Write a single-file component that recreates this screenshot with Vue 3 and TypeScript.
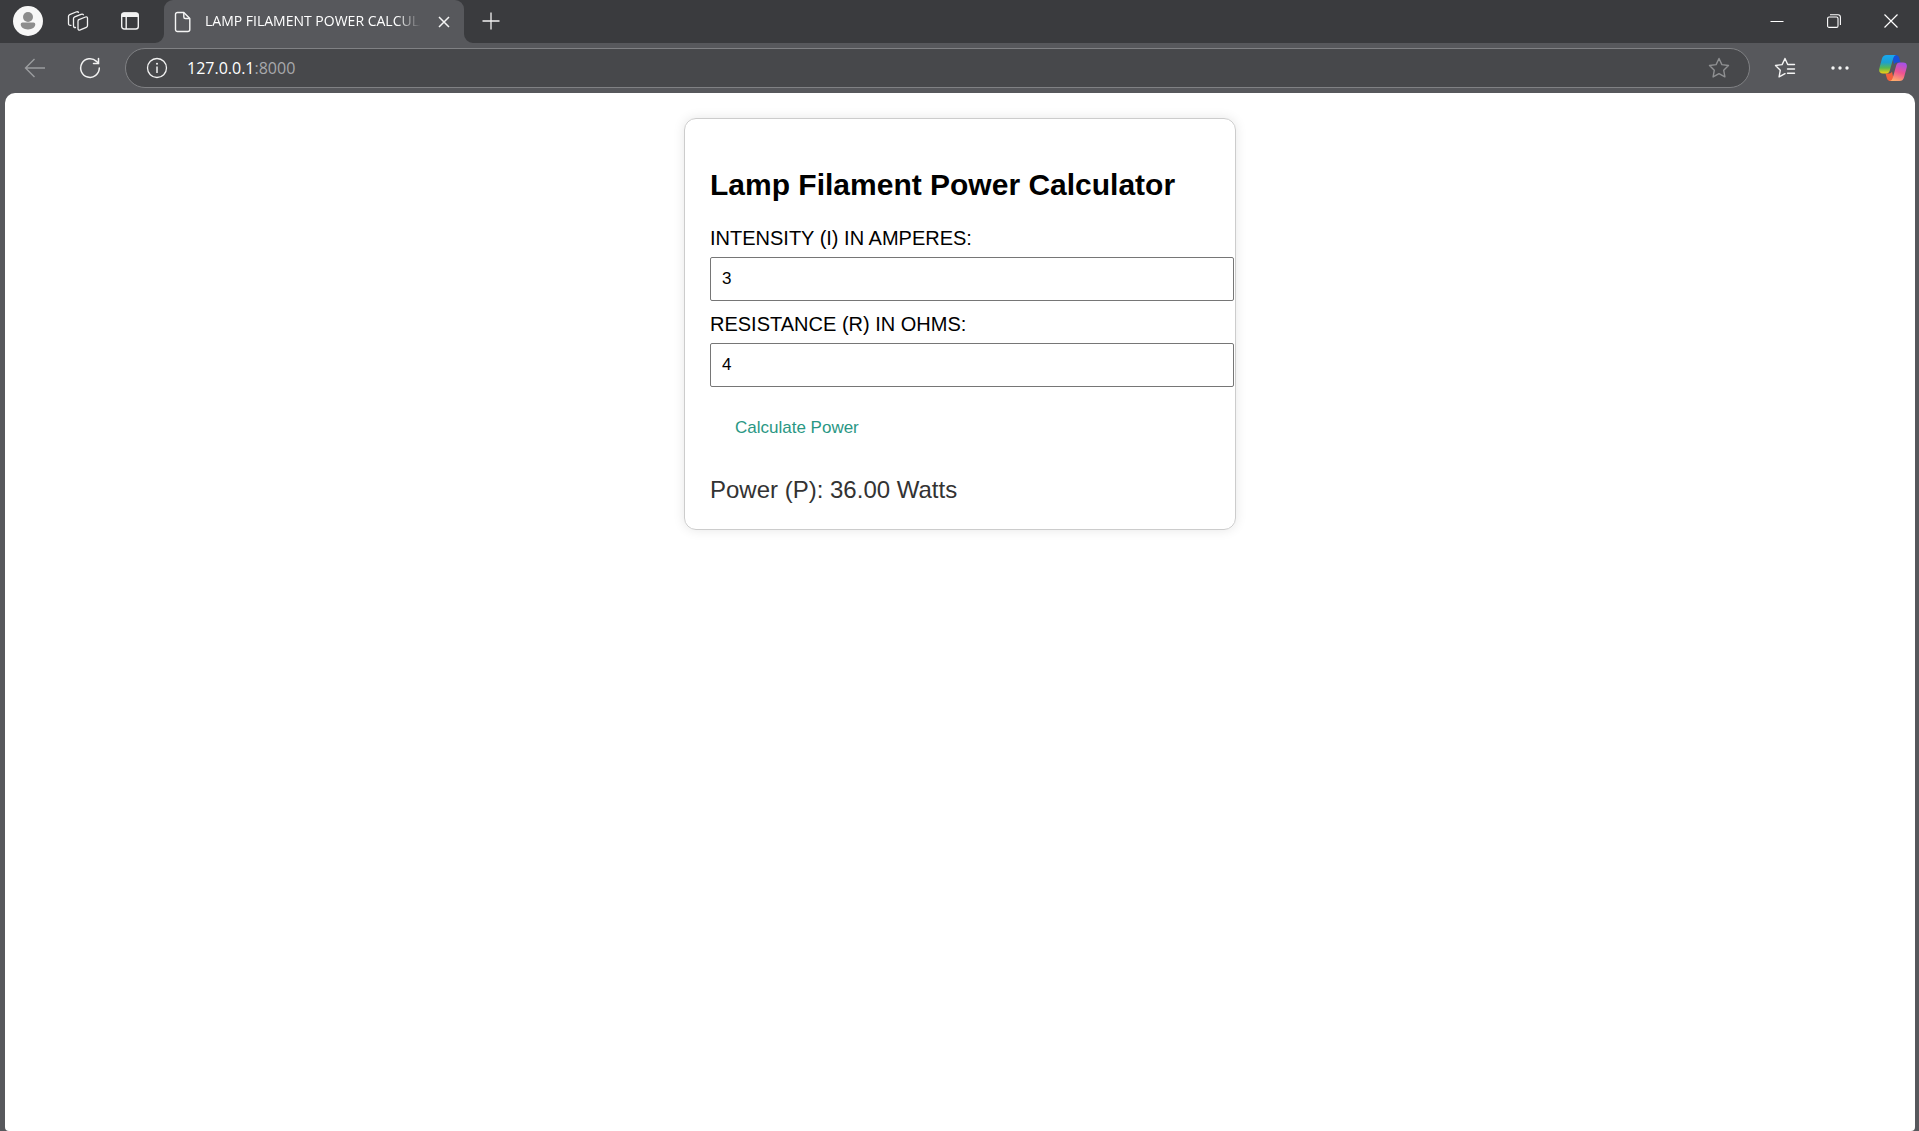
<script setup lang="ts">
import { computed, ref } from 'vue'

const intensity = ref<number>(3)
const resistance = ref<number>(4)
const power = ref<number>(36)

const powerText = computed<string>(() => power.value.toFixed(2))

function calculatePower(): void {
  power.value = intensity.value ** 2 * resistance.value
}
</script>

<template>
  <div class="browser">
    <header class="titlebar">
      <div class="tab-tools">
        <button class="icon-button profile" type="button" aria-label="Profile">
          <svg width="30" height="30" viewBox="0 0 30 30">
            <circle cx="15" cy="15" r="15" fill="#f7f7f7" />
            <circle cx="15" cy="11" r="5" fill="#8c8c8c" />
            <path d="M9.500 16.500h11a1.800 1.800 0 0 1 1.800 1.800c0 3-3 5.200-7.300 5.200s-7.300-2.200-7.300-5.200A1.800 1.800 0 0 1 9.500 16.500z" fill="#8c8c8c" />
          </svg>
        </button>
        <button class="icon-button workspaces" type="button" aria-label="Workspaces">
          <svg width="22" height="22" viewBox="0 0 22 22" fill="none" stroke="#f2f2f2" stroke-width="1.300" stroke-linejoin="round" stroke-linecap="round">
            <path d="M11.300 9.800 18.500 7q2-.6 2 1.200v7.300q0 1.300-1.200 1.800l-6 2.500q-2.300.8-2.300-1.200v-7.500q0-.9.800-1.300z" />
            <path d="M8.500 17.500q-2 .2-2-1.800V8.600q0-1.200 1.200-1.700L14 4.300q1.800-.6 2.400.5" />
            <path d="M4 15.300q-2.500.3-2.500-1.800V6.300q0-1.200 1.200-1.700L9 2q1.700-.6 2.500.3" />
          </svg>
        </button>
        <button class="icon-button" type="button" aria-label="Tab actions">
          <svg width="20" height="20" viewBox="0 0 20 20" fill="none" stroke="#f2f2f2" stroke-width="1.400">
            <rect x="1.700" y="2" width="16.600" height="16" rx="2.500" />
            <path d="M1.500 6V4.500a3 3 0 0 1 3-3h11a3 3 0 0 1 3 3V6z" fill="#f2f2f2" stroke="none" />
            <path d="M6.200 6v12" />
          </svg>
        </button>
      </div>

      <div class="tab">
        <svg class="flare" width="9" height="9" viewBox="0 0 9 9"><path d="M9 0v9H0a9 9 0 0 0 9-9z" fill="#57585c" /></svg>
        <svg class="flare flare-end" width="9" height="9" viewBox="0 0 9 9"><path d="M0 0v9h9a9 9 0 0 1-9-9z" fill="#57585c" /></svg>
        <svg width="18" height="22" viewBox="0 0 18 22" fill="none" stroke="#f5f5f5" stroke-width="1.400" stroke-linejoin="round">
          <path d="M3.500 1.500h6.300l6 6v11a2 2 0 0 1-2 2H3.500a2 2 0 0 1-2-2v-15a2 2 0 0 1 2-2z" />
          <path d="M9.800 1.700v4.300q0 1.500 1.500 1.500h4.500" />
        </svg>
        <span class="tab-title">LAMP FILAMENT POWER CALCULATOR</span>
        <button class="icon-button" type="button" aria-label="Close tab">
          <svg width="12" height="12" viewBox="0 0 12 12" stroke="#f5f5f5" stroke-width="1.500"><path d="M1 1l10 10M11 1 1 11" /></svg>
        </button>
      </div>

      <button class="icon-button new-tab" type="button" aria-label="New tab">
        <svg width="18" height="18" viewBox="0 0 18 18" stroke="#f2f2f2" stroke-width="1.300"><path d="M9 .5v17M.5 9h17" /></svg>
      </button>

      <div class="window-controls">
        <button class="icon-button" type="button" aria-label="Minimize">
          <svg width="14" height="14" viewBox="0 0 14 14" stroke="#fff"><path d="M.5 7.500h13" /></svg>
        </button>
        <button class="icon-button" type="button" aria-label="Restore">
          <svg width="14" height="14" viewBox="0 0 14 14" fill="none" stroke="#fff" stroke-width="1.100">
            <rect x=".6" y="3" width="10.400" height="10.400" rx="1.500" />
            <path d="M3 .8h8q2.400 0 2.400 2.400V11" />
          </svg>
        </button>
        <button class="icon-button" type="button" aria-label="Close">
          <svg width="14" height="14" viewBox="0 0 14 14" stroke="#fff" stroke-width="1.200"><path d="M.5.5l13 13M13.500.5l-13 13" /></svg>
        </button>
      </div>
    </header>

    <nav class="toolbar">
      <button class="icon-button back" type="button" aria-label="Back">
        <svg width="22" height="22" viewBox="0 0 22 22" fill="none" stroke="#9b9c9f" stroke-width="1.400"><path d="M21 11H2M10.500 2 1.500 11l9 9" /></svg>
      </button>
      <button class="icon-button refresh" type="button" aria-label="Refresh">
        <svg width="22" height="22" viewBox="0 0 22 22" fill="none" stroke="#f2f2f2" stroke-width="1.500" stroke-linecap="round">
          <path d="M20.300 11a9.300 9.300 0 1 1-2.800-6.600L19.300 6" />
          <path d="M19.500 1.500v5h-5" />
        </svg>
      </button>

      <div class="address">
        <svg width="22" height="22" viewBox="0 0 22 22" fill="none" stroke="#f2f2f2" stroke-width="1.300">
          <circle cx="11" cy="11" r="9.500" />
          <path d="M11 9.500v6.500" stroke-width="1.500" />
          <circle cx="11" cy="6.700" r="1" fill="#f2f2f2" stroke="none" />
        </svg>
        <span class="url">127.0.0.1<span class="port">:8000</span></span>
        <button class="icon-button" type="button" aria-label="Add to favorites">
          <svg width="22" height="22" viewBox="0 0 22 22" fill="none" stroke="#8f9092" stroke-width="1.400" stroke-linejoin="round">
            <path d="M11 1.500l2.900 6.100 6.600.9-4.800 4.700 1.200 6.700L11 16.700l-5.900 3.200 1.200-6.700L1.500 8.500l6.600-.9z" />
          </svg>
        </button>
      </div>

      <div class="toolbar-end">
        <button class="icon-button" type="button" aria-label="Favorites">
          <svg width="22" height="22" viewBox="0 0 22 22" fill="none" stroke="#f5f5f5" stroke-width="1.400" stroke-linejoin="round" stroke-linecap="round">
            <path d="M20.500 7.500H13.700L11 1.500 8.100 7.600l-6.600.9 4.800 4.700-1.200 6.700 5.900-3.200" />
            <path d="M13.500 12h7M13.500 16.300h7" />
          </svg>
        </button>
        <button class="icon-button more" type="button" aria-label="Settings and more">
          <svg width="18" height="4" viewBox="0 0 18 4" fill="#f5f5f5"><circle cx="2" cy="2" r="1.700" /><circle cx="9" cy="2" r="1.700" /><circle cx="16" cy="2" r="1.700" /></svg>
        </button>
        <button class="icon-button" type="button" aria-label="Copilot">
          <svg width="28" height="26" viewBox="0 0 28 26">
            <defs>
              <linearGradient id="cool" x1="0" y1="0" x2="0" y2="1">
                <stop offset="0" stop-color="#18a8f0" /><stop offset=".4" stop-color="#1c9fd0" /><stop offset=".7" stop-color="#58b850" /><stop offset="1" stop-color="#f5cf12" />
              </linearGradient>
              <linearGradient id="warm" x1=".6" y1="0" x2=".3" y2="1">
                <stop offset="0" stop-color="#a851e6" /><stop offset=".5" stop-color="#ee5490" /><stop offset="1" stop-color="#ffad6b" />
              </linearGradient>
            </defs>
            <path d="M13 0h3.500q2.800 0 3.600 2.800L21.500 7.500h-3.800q-2 0-2.700 2z" fill="#1750d8" />
            <path d="M15 26h-3.500q-2.800 0-3.600-2.800L6.500 18.500h3.800q2 0 2.700-2z" fill="#f2603c" />
            <path d="M7.500 0H17q-2 .4-2.700 3l-3.500 12.500q-.8 3-3.600 3H4q-4.700 0-3.700-5L3 3.500Q4.100 0 7.500 0z" fill="url(#cool)" />
            <path d="M20.500 26H11q2-.4 2.700-3l3.500-12.500q.8-3 3.600-3H24q4.700 0 3.700 5L25 22.500q-1.100 3.500-4.500 3.500z" fill="url(#warm)" />
          </svg>
        </button>
      </div>
    </nav>

    <main class="page">
      <form class="card" @submit.prevent="calculatePower">
        <h2>Lamp Filament Power Calculator</h2>
        <label for="intensity">INTENSITY (I) IN AMPERES:</label>
        <input id="intensity" v-model.number="intensity" type="number" step="any" />
        <label for="resistance">RESISTANCE (R) IN OHMS:</label>
        <input id="resistance" v-model.number="resistance" type="number" step="any" />
        <button class="calculate" type="submit">Calculate Power</button>
        <output class="result" for="intensity resistance">Power (P): {{ powerText }} Watts</output>
      </form>
    </main>
  </div>
</template>

<style>
body {
  margin: 0;
}
</style>

<style scoped>
.browser {
  display: flex;
  flex-direction: column;
  min-height: 100vh;
  background: #57585c;
  font-family: "Open Sans", "Noto Sans", sans-serif;
  color: #fff;
}

.icon-button {
  display: flex;
  flex: none;
  padding: 0;
  border: 0;
  background: none;
}

.titlebar {
  display: flex;
  align-items: center;
  height: 43px;
  background: #3a3b3e;
}

.tab-tools {
  display: flex;
  align-items: center;
  box-sizing: border-box;
  width: 164px;
  padding: 0 0 1px 13px;
}

.workspaces {
  margin: 0 31px 0 24px;
}

.tab {
  position: relative;
  display: flex;
  align-items: center;
  gap: 13px;
  box-sizing: border-box;
  width: 300px;
  height: 43px;
  padding: 0 14px 0 10px;
  border-radius: 9px 9px 0 0;
  background: #57585c;
}

.flare {
  position: absolute;
  bottom: 0;
  left: -9px;
}

.flare-end {
  left: auto;
  right: -9px;
}

.tab-title {
  flex: 1;
  overflow: hidden;
  padding-bottom: 2px;
  font-size: 14px;
  line-height: 20px;
  white-space: nowrap;
  mask-image: linear-gradient(to right, #000 87%, transparent 98%);
}

.new-tab {
  margin-left: 18px;
  padding-bottom: 2px;
}

.window-controls {
  display: flex;
  gap: 43px;
  margin-left: auto;
  padding: 0 21px 1px 0;
}

.toolbar {
  display: flex;
  align-items: center;
  height: 50px;
}

.back {
  margin-left: 24px;
}

.refresh {
  margin: 0 24px 0 33px;
}

.address {
  display: flex;
  flex: 1;
  align-items: center;
  box-sizing: border-box;
  height: 40px;
  padding: 0 19px 0 20px;
  border: 1px solid #808184;
  border-radius: 20px;
  background: #47484b;
}

.url {
  flex: 1;
  margin-left: 19px;
  font-size: 16px;
  line-height: 24px;
}

.port {
  color: #a8a9ab;
}

.toolbar-end {
  display: flex;
  align-items: center;
  margin: 0 12px 0 24px;
}

.more {
  margin: 0 30px 0 35px;
}

.page {
  flex: 1;
  margin: 0 4px 0 5px;
  padding: 25px;
  border-radius: 10px 10px 4px 4px;
  background: #fff;
}

.card {
  display: flex;
  flex-direction: column;
  align-items: flex-start;
  max-width: 500px;
  margin: 0 auto;
  padding: 25px;
  border: 1px solid #ccc;
  border-radius: 12px;
  box-shadow: 0 0 12px rgba(0, 0, 0, 0.1);
  font-family: "Liberation Sans", Arial, sans-serif;
  color: #000;
}

h2 {
  margin: 24px 0 25px;
  font-size: 30px;
  line-height: 34px;
}

label {
  margin-bottom: 7px;
  font-size: 20px;
  line-height: 23px;
}

input {
  width: 100%;
  height: 20px;
  margin: 0 0 12px;
  padding: 11px;
  border: 1px solid #767676;
  border-radius: 2px;
  background: #fff;
  font-family: inherit;
  font-size: 17px;
  color: #000;
  appearance: textfield;
}

input::-webkit-inner-spin-button {
  appearance: none;
}

.calculate {
  margin: 7px 0 15px;
  padding: 12px 25px;
  border: 0;
  background: none;
  font-family: inherit;
  font-size: 17px;
  line-height: 19px;
  color: #2a9784;
}

.result {
  margin-top: 12px;
  font-size: 24px;
  line-height: 28px;
  color: #333;
}
</style>
